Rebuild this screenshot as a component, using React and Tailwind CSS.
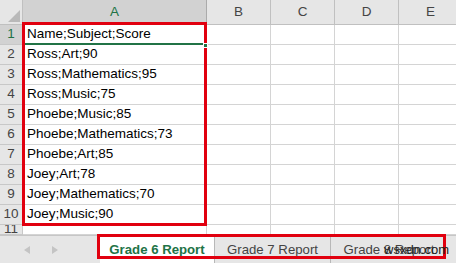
const rows = [
  "Name;Subject;Score",
  "Ross;Art;90",
  "Ross;Mathematics;95",
  "Ross;Music;75",
  "Phoebe;Music;85",
  "Phoebe;Mathematics;73",
  "Phoebe;Art;85",
  "Joey;Art;78",
  "Joey;Mathematics;70",
  "Joey;Music;90",
];

const cols = ["B", "C", "D", "E"];

const Row = ({ n, text, h = "h-[20px]" }) => (
  <div className={`flex ${h} overflow-hidden`}>
    <div
      className={`w-[23px] shrink-0 flex items-center justify-center border-r border-b border-[#c8c8c8] ${
        n === 1 ? "bg-[#d2d2d2] text-[#217346]" : "bg-[#e6e6e6] text-[#444]"
      }`}
    >
      {n}
    </div>
    <div className="w-[184px] shrink-0 relative flex items-center pl-[4px] border-r border-b border-[#d4d4d4] text-black whitespace-nowrap">
      {text}
      {n === 1 && (
        <div className="absolute left-0 right-0 bottom-[-1px] h-[2px] bg-[#217346]" />
      )}
    </div>
    {cols.map((c) => (
      <div key={c} className="w-[64px] shrink-0 border-r border-b border-[#d4d4d4]" />
    ))}
  </div>
);

export default function App() {
  return (
    <div
      className="relative w-[456px] h-[263px] overflow-hidden bg-white text-[13.5px]"
      style={{ fontFamily: '"Liberation Sans", Arial, sans-serif' }}
    >
      {/* column headers */}
      <div className="flex h-[25px]">
        <div className="w-[23px] shrink-0 bg-[#e6e6e6] border-r border-b border-[#c0c0c0] relative">
          <svg className="absolute right-[2px] bottom-[2px]" width="12" height="12" viewBox="0 0 12 12">
            <polygon points="12,0 12,12 0,12" fill="#b9b9b9" />
          </svg>
        </div>
        <div className="w-[184px] shrink-0 bg-[#d2d2d2] text-[#217346] flex items-center justify-center border-r border-b border-[#ababab]">
          A
        </div>
        {cols.map((c) => (
          <div
            key={c}
            className="w-[64px] shrink-0 bg-[#e6e6e6] text-[#444] flex items-center justify-center border-r border-b border-[#c0c0c0]"
          >
            {c}
          </div>
        ))}
      </div>

      {rows.map((t, i) => (
        <Row key={i} n={i + 1} text={t} />
      ))}
      <Row n={11} text="" h="h-[10px]" />

      {/* sheet tabs */}
      <div className="flex h-[28px] bg-[#e6e6e6] border-t border-[#c6c6c6] text-[13.2px]">
        <div className="w-[100px] shrink-0 flex items-center pl-[24px] gap-[22px]">
          <svg width="6" height="8" viewBox="0 0 6 8">
            <polygon points="6,0 6,8 0,4" fill="#c4c4c4" />
          </svg>
          <svg width="6" height="8" viewBox="0 0 6 8">
            <polygon points="0,0 0,8 6,4" fill="#c4c4c4" />
          </svg>
        </div>
        <div className="w-[115px] shrink-0 bg-white flex items-center justify-center font-bold text-[#217346] border-r border-[#b8b8b8]">
          Grade 6 Report
        </div>
        <div className="w-[116px] shrink-0 flex items-center justify-center text-[#444] border-r border-[#b8b8b8]">
          Grade 7 Report
        </div>
        <div className="w-[116px] shrink-0 flex items-center justify-center text-[#444]">
          Grade 8 Report
        </div>
      </div>

      {/* red highlight boxes */}
      <div className="absolute left-[22px] top-[22px] w-[185px] h-[204px] border-[3px] border-[#e1000f] pointer-events-none" />
      <div className="absolute left-[203px] top-[43px] w-[5px] h-[5px] bg-[#217346] border border-white" />
      <div className="absolute left-[97px] top-[234px] w-[349px] h-[25px] border-[3px] border-[#e1000f] pointer-events-none" />

      <div className="absolute left-[384px] top-[243px] text-[13px] text-[#222] leading-none">
        wsxdn.com
      </div>
    </div>
  );
}
